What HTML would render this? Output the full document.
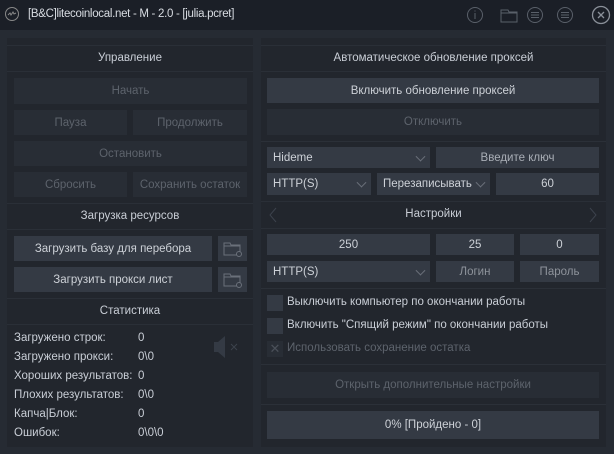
<!DOCTYPE html><html><head><meta charset="utf-8"><style>
*{margin:0;padding:0;box-sizing:border-box}
body{width:614px;height:454px;background:#262b33;font-family:"Liberation Sans","DejaVu Sans",sans-serif;font-size:11.5px;color:#cdd1d7;position:relative;overflow:hidden}
.a{position:absolute}
.tb{left:0;top:0;width:614px;height:30px;background:#1b1f27}
.p{background:#22262d}
.h{text-align:center;line-height:25px;color:#c9ced6;border-top:1px solid #2a2f37;border-bottom:1px solid #2a2f37}
.b{background:#343a44;text-align:center;display:flex;align-items:center;justify-content:center;color:#cdd1d7}
.d{background:#282d35;color:#5d636c}
.l{justify-content:flex-start;padding-left:6px}
.ch{position:absolute;right:6px;top:50%;width:7px;height:7px;border-right:1px solid #6a707a;border-bottom:1px solid #6a707a;transform:translateY(-70%) rotate(45deg)}
.s{color:#c9ced6;line-height:19px}
.cb{width:16px;height:16px;background:#343a44}
.ln{height:1px;background:#2b3038}
</style></head><body>
<div class="a tb"></div>
<svg class="a" style="left:4px;top:6px" width="16" height="16"><circle cx="8" cy="8" r="6.5" fill="none" stroke="#888" stroke-width="1"/><path d="M4 9l2-2 1 2 2-3 1 2 2-1" stroke="#888" fill="none"/></svg>
<div class="a" style="left:28px;top:8px;font-size:11.5px;letter-spacing:-0.3px;color:#d8dce2">[B&amp;C]litecoinlocal.net - M - 2.0 - [julia.pcret]</div>
<svg class="a" style="left:464px;top:4px" width="150" height="22" fill="none" stroke="#5a606a" stroke-width="1">
<circle cx="11" cy="11" r="7.5"/><path d="M11 9v6M11 6.5v1"/>
<path d="M37 6h7l1 2h8v10H37z M37 9h16"/>
<circle cx="71" cy="11" r="7.5"/><path d="M67 8.5h8M67 11h8M67 13.5h8"/>
<circle cx="101" cy="11" r="7.5"/><path d="M97 8.5h8M97 11h8M97 13.5h8"/>
<circle cx="137" cy="11" r="8.5" stroke="#8a9099" stroke-width="1.3"/><path d="M134 8l6 6M140 8l-6 6" stroke="#8a9099" stroke-width="1.3"/>
</svg>
<div class="a p" style="left:7px;top:38px;width:246px;height:409px"></div>
<div class="a p" style="left:261px;top:38px;width:345px;height:409px"></div>
<div class="a h" style="left:7px;top:45px;width:246px;height:27px">Управление</div>
<div class="a b d" style="left:14px;top:78px;width:233px;height:26px">Начать</div>
<div class="a b d" style="left:14px;top:110px;width:113px;height:25px">Пауза</div>
<div class="a b d" style="left:133px;top:110px;width:114px;height:25px">Продолжить</div>
<div class="a b d" style="left:14px;top:141px;width:233px;height:25px">Остановить</div>
<div class="a b d" style="left:14px;top:172px;width:113px;height:25px">Сбросить</div>
<div class="a b d" style="left:133px;top:172px;width:114px;height:25px">Сохранить остаток</div>
<div class="a h" style="left:7px;top:203px;width:246px;height:27px">Загрузка ресурсов</div>
<div class="a b" style="left:14px;top:236px;width:198px;height:25px">Загрузить базу для перебора</div>
<div class="a b" style="left:14px;top:267px;width:198px;height:25px">Загрузить прокси лист</div>
<div class="a b" style="left:218px;top:236px;width:29px;height:25px"><svg width="20" height="16" fill="none" stroke="#6a707a"><path d="M1 2h6l1 2h9v10H1z M1 5h16"/><circle cx="16" cy="13" r="2.5" fill="#343a44"/></svg></div>
<div class="a b" style="left:218px;top:267px;width:29px;height:25px"><svg width="20" height="16" fill="none" stroke="#6a707a"><path d="M1 2h6l1 2h9v10H1z M1 5h16"/><circle cx="16" cy="13" r="2.5" fill="#343a44"/></svg></div>
<div class="a h" style="left:7px;top:298px;width:246px;height:27px">Статистика</div>
<div class="a s" style="left:14px;top:329px">Загружено строк:<br>Загружено прокси:<br>Хороших результатов:<br>Плохих результатов:<br>Капча|Блок:<br>Ошибок:</div>
<div class="a s" style="left:138px;top:329px">0<br>0\0<br>0<br>0\0<br>0<br>0\0\0</div>
<svg class="a" style="left:212px;top:334px" width="30" height="26"><path d="M2 8h4l7-6v22l-7-6H2z" fill="#343a44"/><path d="M19 10l6 6M25 10l-6 6" stroke="#3c424c"/></svg>
<div class="a h" style="left:261px;top:45px;width:345px;height:27px">Автоматическое обновление проксей</div>
<div class="a b" style="left:267px;top:78px;width:332px;height:25px">Включить обновление проксей</div>
<div class="a b d" style="left:267px;top:109px;width:332px;height:26px">Отключить</div>
<div class="a ln" style="left:261px;top:141px;width:345px"></div>
<div class="a b l" style="left:267px;top:147px;width:163px;height:21px">Hideme<span class="ch"></span></div>
<div class="a b" style="left:436px;top:147px;width:163px;height:21px;color:#a9aeb6">Введите ключ</div>
<div class="a b l" style="left:267px;top:173px;width:104px;height:22px">HTTP(S)<span class="ch"></span></div>
<div class="a b l" style="left:377px;top:173px;width:113px;height:22px">Перезаписывать<span class="ch"></span></div>
<div class="a b" style="left:496px;top:173px;width:103px;height:22px">60</div>
<div class="a h" style="left:261px;top:201px;width:345px;height:28px">Настройки</div>
<svg class="a" style="left:268px;top:207px" width="10" height="16" fill="none" stroke="#3c424c"><path d="M8 1L2 8l6 7"/></svg>
<svg class="a" style="left:588px;top:207px" width="10" height="16" fill="none" stroke="#3c424c"><path d="M2 1l6 7-6 7"/></svg>
<div class="a b" style="left:267px;top:234px;width:163px;height:21px">250</div>
<div class="a b" style="left:436px;top:234px;width:78px;height:21px">25</div>
<div class="a b" style="left:520px;top:234px;width:79px;height:21px">0</div>
<div class="a b l" style="left:267px;top:261px;width:163px;height:21px">HTTP(S)<span class="ch"></span></div>
<div class="a b" style="left:436px;top:261px;width:78px;height:21px;color:#8e939b">Логин</div>
<div class="a b" style="left:520px;top:261px;width:79px;height:21px;color:#8e939b">Пароль</div>
<div class="a ln" style="left:261px;top:288px;width:345px"></div>
<div class="a cb" style="left:267px;top:295px"></div>
<div class="a s" style="left:287px;top:293px">Выключить компьютер по окончании работы</div>
<div class="a cb" style="left:267px;top:318px"></div>
<div class="a s" style="left:287px;top:316px">Включить "Спящий режим" по окончании работы</div>
<div class="a cb" style="left:267px;top:341px;background:#282d35;color:#4a5059;text-align:center;line-height:16px;font-size:13px">✕</div>
<div class="a s" style="left:287px;top:339px;color:#5d636c">Использовать сохранение остатка</div>
<div class="a ln" style="left:261px;top:364px;width:345px"></div>
<div class="a b d" style="left:267px;top:372px;width:332px;height:26px">Открыть дополнительные настройки</div>
<div class="a ln" style="left:261px;top:404px;width:345px"></div>
<div class="a b" style="left:267px;top:411px;width:332px;height:28px">0% [Пройдено - 0]</div>
</body></html>
